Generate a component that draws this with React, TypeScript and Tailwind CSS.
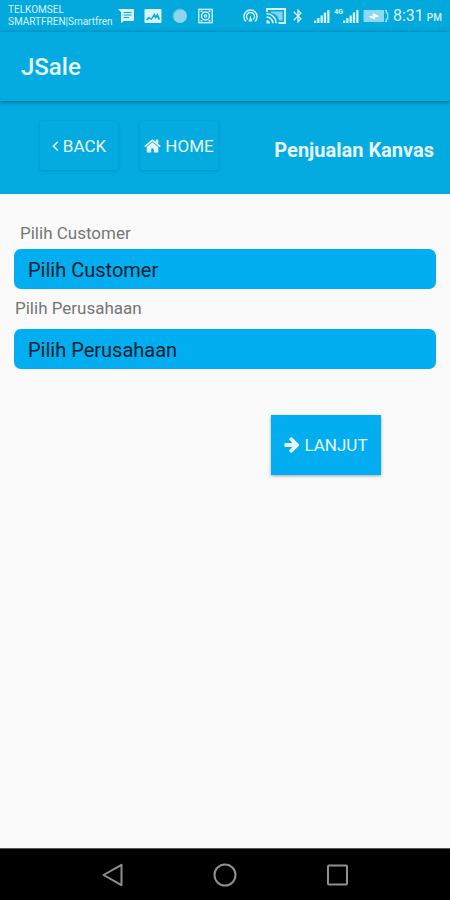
import type { ReactNode } from "react";
import { MdBluetooth } from "react-icons/md";

/* BUTTON ICONS */
function AngleLeftIcon() {
  return (
    <svg width="7" height="12" viewBox="0 0 7 12" className="shrink-0" aria-hidden="true">
      <path d="M5.800 1.800L1.500 6.200l4.300 4.300" fill="none" stroke="currentColor" strokeWidth="1.600" />
    </svg>
  );
}

function HouseIcon() {
  return (
    <svg width="17" height="18" viewBox="0 0 1664 1792" className="shrink-0" aria-hidden="true" fill="currentColor">
      <path d="M1408 992v480q0 26-19 45t-45 19H960v-384H704v384H320q-26 0-45-19t-19-45V992q0-1 .5-3t.5-3l575-474 575 474q1 2 1 6zm223-69l-62 74q-8 9-21 11h-3q-13 0-21-7L832 424 140 1001q-12 8-24 7-13-2-21-11l-62-74q-8-10-7-23.500T37 878l719-599q32-26 76-26t76 26l244 204V288q0-14 9-23t23-9h192q14 0 23 9t9 23v408l219 182q10 8 11 21.500t-7 23.500z" />
    </svg>
  );
}

function ArrowRightIcon() {
  return (
    <svg width="16" height="18" viewBox="0 0 1536 1792" className="shrink-0" aria-hidden="true" fill="currentColor">
      <path d="M1472 896q0 54-37 91l-651 651q-39 37-91 37-51 0-90-37l-75-75q-38-38-38-91t38-91l293-293H117q-52 0-84.500-37.500T0 960V832q0-53 32.500-90.500T117 704h704L528 410q-38-36-38-90t38-90l75-75q38-38 90-38 53 0 91 38l651 651q37 35 37 90z" />
    </svg>
  );
}

/* STATUS BAR ICONS */
function MessageIcon() {
  return (
    <svg width="16" height="16" viewBox="0 0 16 16" className="shrink-0" aria-hidden="true">
      <path d="M0 1h15a1 1 0 0 1 1 1v10a1 1 0 0 1-1 1H6l-3 2V4z" fill="currentColor" />
      <path d="M5.500 4.500h8M5.500 7h8M5.500 9.500h5.500" stroke="#03a9dc" strokeWidth="1.100" />
    </svg>
  );
}

function PictureIcon() {
  return (
    <svg width="18" height="16" viewBox="0 0 18 16" className="shrink-0" aria-hidden="true">
      <rect x="0.500" y="1" width="17" height="14" rx="1" fill="currentColor" />
      <path d="M2 11.500l3-3 2 2 3.500-5.500 1.500 3 1.500-3 2.500 6-1.500 1-1.500-3-1.500 2-1.300-2.500L7.500 12 5 10.500l-1.500 2z" fill="#03a9dc" />
    </svg>
  );
}

function BallIcon() {
  return (
    <svg width="16" height="16" viewBox="0 0 16 16" className="shrink-0" aria-hidden="true">
      <circle cx="8" cy="8" r="7" fill="#8bd5f0" />
      <path d="M1.800 10.500A6.800 6.800 0 0 1 9 1.300" fill="none" stroke="#5dbde5" strokeWidth="1.400" />
    </svg>
  );
}

function DialIcon() {
  return (
    <svg width="15" height="16" viewBox="0 0 15 16" className="shrink-0" aria-hidden="true" fill="none" stroke="currentColor">
      <rect x="0.800" y="1.300" width="13.400" height="13.400" strokeWidth="1.300" />
      <circle cx="7.500" cy="8" r="4" strokeWidth="1.500" />
      <circle cx="7.500" cy="8" r="1.200" strokeWidth="1.200" />
      <path d="M2.500 3.200h2M10.500 3.200h2M2.500 12.800h2M10.500 12.800h2" strokeWidth="1.600" />
    </svg>
  );
}

function HotspotIcon() {
  return (
    <svg width="15" height="16" viewBox="0 0 15 16" className="shrink-0" aria-hidden="true" fill="none" stroke="currentColor" strokeWidth="1.400">
      <path d="M3 13.500a6.600 6.600 0 1 1 9 0" />
      <path d="M4.800 11.500a4 4 0 1 1 5.400 0" />
      <path d="M7.500 7.500l-2 6h4z" fill="currentColor" stroke="none" />
    </svg>
  );
}

function CastIcon() {
  return (
    <svg width="20" height="16" viewBox="0 0 20 16" className="shrink-0" aria-hidden="true" fill="none" stroke="currentColor">
      <path d="M1 4V1h18v14h-6.500" strokeWidth="1.800" />
      <path d="M5 3.500h11.500v9H13A9 9 0 0 0 5 5z" fill="currentColor" stroke="none" opacity="0.600" />
      <path d="M.5 5.800a9.300 9.300 0 0 1 9.500 9.500M.5 9a6.200 6.200 0 0 1 6.300 6.300" strokeWidth="1.600" />
      <path d="M.5 12v3.500H4A3.500 3.500 0 0 0 .5 12z" fill="currentColor" stroke="none" />
    </svg>
  );
}

function SignalIcon() {
  return (
    <svg width="16" height="14" viewBox="0 0 16 14" className="shrink-0" aria-hidden="true" fill="currentColor">
      <path d="M0 11.500h2.300V14H0zM3.200 9h2.300v5H3.200zM6.500 6.500h2.300V14H6.500zM9.800 3.500h2.300V14H9.800zM13.200 1h2.300v13h-2.300z" />
    </svg>
  );
}

function BatteryIcon() {
  return (
    <svg width="26" height="14" viewBox="0 0 26 14" className="shrink-0" aria-hidden="true">
      <rect x="0.500" y="1" width="20.500" height="12" fill="#8ed8f2" />
      <path d="M5.500 7.500L10 6.300V4l6.500 3.200-4.500 1.100v2.400z" fill="#fff" />
      <path d="M22 1.500h1.300V4h1.500v6h-1.500v2.500H22" fill="none" stroke="#b4e5f6" strokeWidth="1.200" />
    </svg>
  );
}

function StatusBar() {
  return (
    <div className="flex h-8 items-center justify-between bg-[#03a9dc] px-2 text-[#d8f3fb]">
      <div className="flex items-center gap-2">
        <p className="w-[102px] whitespace-nowrap text-[10px] leading-[12px]">
          TELKOMSEL
          <br />
          SMARTFREN|Smartfren
        </p>
        <div className="flex items-center gap-[10px]">
          <MessageIcon />
          <PictureIcon />
          <BallIcon />
          <DialIcon />
        </div>
      </div>
      <div className="flex items-center gap-1">
        <div className="flex items-center gap-2">
          <HotspotIcon />
          <CastIcon />
        </div>
        <MdBluetooth size={16} className="shrink-0" aria-hidden="true" />
        <div className="flex items-center gap-1 pl-1">
          <SignalIcon />
          <div className="flex items-center">
            <span className="self-start text-[7px] font-bold leading-[7px]">4G</span>
            <SignalIcon />
          </div>
          <BatteryIcon />
        </div>
        <p className="flex items-baseline gap-[3px] whitespace-nowrap pt-[2px] text-[16px] leading-[20px]">
          8:31 <span className="text-[10px] font-medium">PM</span>
        </p>
      </div>
    </div>
  );
}

function HeaderButton({ children }: { children: ReactNode }) {
  return (
    <button
      type="button"
      className="flex h-[49px] w-[78px] items-center justify-center gap-1 whitespace-nowrap rounded-[2px] text-[17px] leading-[24px] shadow-[0_1px_3px_rgba(0,60,90,0.25)]"
    >
      {children}
    </button>
  );
}

function SelectField({ id, label }: { id: string; label: string }) {
  return (
    <select
      id={id}
      className="h-10 w-full appearance-none rounded-[7px] bg-[#02aef0] px-[14px] pt-px text-[20px] leading-[24px] text-[#06202e]"
    >
      <option>{label}</option>
    </select>
  );
}

export default function App() {
  return (
    <div className="flex min-h-screen flex-col bg-[#fafafa] font-[Roboto,sans-serif]">
      <StatusBar />

      {/* APP BAR */}
      <header className="z-10 flex h-[69px] items-center bg-[#03abe0] px-[21px] shadow-[0_1px_4px_rgba(0,50,80,0.6)]">
        <h1 className="text-[24px] font-medium leading-[28px] text-[#e6f8fd]">JSale</h1>
      </header>

      {/* PAGE HEADER */}
      <div className="flex h-[93px] items-center justify-between bg-[#03abe0] pl-10 pr-4 text-[#e6f8fd]">
        <div className="flex gap-[22px] pb-1">
          <HeaderButton>
            <AngleLeftIcon />
            BACK
          </HeaderButton>
          <HeaderButton>
            <HouseIcon />
            HOME
          </HeaderButton>
        </div>
        <h2 className="pt-1 text-[20px] font-bold leading-[24px]">Penjualan Kanvas</h2>
      </div>

      {/* FORM */}
      <form className="flex flex-1 flex-col px-[14px] pt-[27px]">
        <label htmlFor="customer" className="pb-1 pl-[6px] text-[17px] leading-[24px] text-[#757575]">
          Pilih Customer
        </label>
        <SelectField id="customer" label="Pilih Customer" />
        <label htmlFor="perusahaan" className="pb-[9px] pl-px pt-[7px] text-[17px] leading-[24px] text-[#757575]">
          Pilih Perusahaan
        </label>
        <SelectField id="perusahaan" label="Pilih Perusahaan" />
        <button
          type="button"
          className="mr-[55px] mt-[46px] flex h-[60px] w-[110px] items-center justify-center gap-1 self-end bg-[#02aef0] text-[17px] leading-[24px] text-[#e6f8fd] shadow-[0_1px_3px_rgba(0,0,0,0.35)]"
        >
          <ArrowRightIcon />
          LANJUT
        </button>
      </form>

      {/* SYSTEM NAVIGATION */}
      <nav className="flex h-[52px] items-center justify-center gap-[88px] border-t border-[#555] bg-black text-[#909090]">
        <button type="button" aria-label="Back">
          <svg width="24" height="24" viewBox="0 0 24 24" fill="none" stroke="currentColor" strokeWidth="2" strokeLinejoin="round">
            <path d="M2.500 12L20.500 1.800v20.400z" />
          </svg>
        </button>
        <button type="button" aria-label="Home">
          <svg width="24" height="24" viewBox="0 0 24 24" fill="none" stroke="currentColor" strokeWidth="2">
            <circle cx="12" cy="12" r="10.500" />
          </svg>
        </button>
        <button type="button" aria-label="Recent apps">
          <svg width="24" height="24" viewBox="0 0 24 24" fill="none" stroke="currentColor" strokeWidth="2">
            <rect x="3" y="2.500" width="19" height="19" rx="1" />
          </svg>
        </button>
      </nav>
    </div>
  );
}
